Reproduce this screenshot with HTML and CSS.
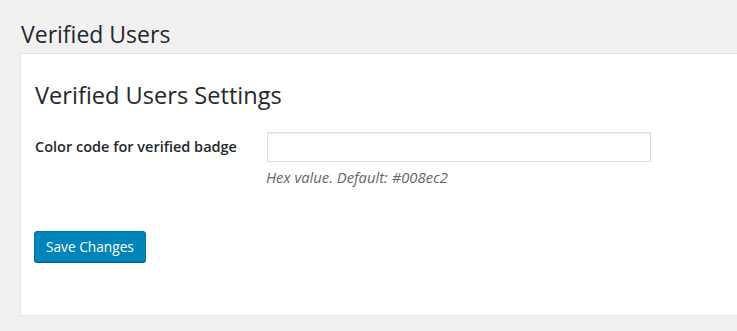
FILE: index.html
```html
<!DOCTYPE html>
<html lang="en">
<head>
    <meta charset="UTF-8">
    <meta name="viewport" content="width=device-width, initial-scale=1.0">
    <title>Verified Users</title>
    <link rel="stylesheet" href="styles.css">
</head>
<body>

<div class="wrap">
    <h1>Verified Users</h1>

    <!-- Panel de ajustes -->
    <div class="panel">
        <h2>Verified Users Settings</h2>

        <form class="settings-form" onsubmit="return false;">
            <div class="form-row">
                <label for="badgeColor">Color code for verified badge</label>
                <div class="field">
                    <input type="text" id="badgeColor">
                    <p class="description">Hex value. Default: #008ec2</p>
                </div>
            </div>

            <button type="submit" class="button-primary">Save Changes</button>
        </form>
    </div>
</div>

</body>
</html>
```

FILE: styles.css
```css
body {
    font-family: 'Open Sans', sans-serif;
    margin: 0;
    padding: 0;
    background-color: #f1f1f1;
    color: #23282d;
    overflow: hidden;
}

.wrap {
    padding: 20px 0 0 20px;
}

h1 {
    font-size: 23px;
    font-weight: 400;
    line-height: 29px;
    margin: 0 0 4px 1px;
}

.panel {
    background-color: #ffffff;
    border: 1px solid #e5e5e5;
    box-shadow: 0 1px 1px rgba(0, 0, 0, 0.04);
    margin-right: -20px;
    padding: 26px 14px 53px;
}

.panel h2 {
    font-size: 23.6px;
    font-weight: 400;
    line-height: 30px;
    margin: 0 0 22px;
}

.form-row {
    display: grid;
    grid-template-columns: 232px auto;
    align-items: start;
}

.form-row label {
    font-size: 14.5px;
    font-weight: 600;
    line-height: 30px;
}

.form-row input {
    width: 384px;
    height: 30px;
    box-sizing: border-box;
    border: 1px solid #dddddd;
    box-shadow: inset 0 1px 2px rgba(0, 0, 0, 0.07);
    padding: 3px 5px;
    margin: 0;
}

.description {
    font-size: 14.8px;
    font-style: italic;
    color: #666666;
    margin: 5px 0 0 -1px;
}

.button-primary {
    margin-top: 44px;
    margin-left: -1px;
    background-color: #0085ba;
    border: 1px solid #0073aa;
    border-radius: 3px;
    box-shadow: 0 1px 0 #006799;
    color: #ffffff;
    font-family: inherit;
    font-size: 13.7px;
    height: 31px;
    padding: 0 11px;
    cursor: pointer;
}

.button-primary:hover {
    background-color: #008ec2;
}
```
